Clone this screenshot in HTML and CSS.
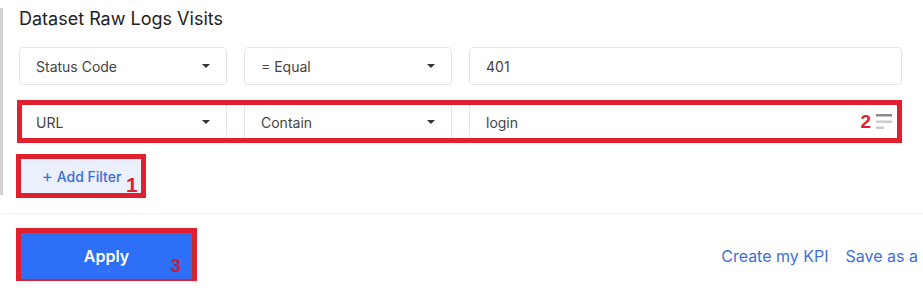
FILE: index.html
```html
<!DOCTYPE html>
<html lang="en">
<head>
  <meta charset="UTF-8">
  <meta name="viewport" content="width=device-width, initial-scale=1.0">
  <title>Dataset Raw Logs Visits - Filters</title>
  <link rel="stylesheet" href="styles.css">
</head>
<body>
  <!-- Filter panel -->
  <div class="panel">
    <h2 class="panel-title">Dataset Raw Logs Visits</h2>

    <!-- Filter 1 -->
    <div class="filter-row">
      <div class="field">
        <span>Status Code</span>
        <span class="caret"></span>
      </div>
      <div class="field">
        <span>= Equal</span>
        <span class="caret"></span>
      </div>
      <div class="field">
        <span>401</span>
      </div>
    </div>

    <!-- Filter 2 -->
    <div class="filter-row marked">
      <div class="field">
        <span>URL</span>
        <span class="caret"></span>
      </div>
      <div class="field">
        <span>Contain</span>
        <span class="caret"></span>
      </div>
      <div class="field">
        <span>login</span>
        <svg class="drag-icon" width="16" height="16" viewBox="0 0 16 16">
          <rect x="0" y="1" width="16" height="2.5" fill="#8a8a8a"/>
          <rect x="0" y="7.5" width="16" height="2.5" fill="#cccccc"/>
          <rect x="0" y="13.5" width="8" height="2.5" fill="#cccccc"/>
        </svg>
      </div>
      <div class="mark"></div>
      <span class="mark-num num-2">2</span>
    </div>

    <!-- Add filter -->
    <div class="add-wrap">
      <button class="btn-add"><span class="plus">+</span> Add Filter</button>
      <div class="mark"></div>
      <span class="mark-num num-1">1</span>
    </div>
  </div>

  <div class="divider"></div>

  <!-- Actions -->
  <div class="actions">
    <div class="apply-wrap">
      <button class="btn-apply">Apply</button>
      <div class="mark"></div>
      <span class="mark-num num-3">3</span>
    </div>
    <div class="links">
      <a href="#">Create my KPI</a>
      <a href="#">Save as a</a>
    </div>
  </div>
</body>
</html>
```

FILE: styles.css
```css
body {
  margin: 0;
  font-family: 'Inter', 'Liberation Sans', sans-serif;
  background-color: #fff;
  color: #444;
  overflow: hidden;
}

.panel {
  margin-top: 8px;
  border-left: 3px solid #d2d2d2;
  padding: 0 21px 0 16px;
}

.panel-title {
  margin: 0;
  font-size: 18px;
  font-weight: 400;
  line-height: 22px;
  color: #222;
}

.filter-row {
  display: grid;
  grid-template-columns: 208px 208px 1fr;
  gap: 17px;
  margin-top: 17px;
}

.filter-row.marked {
  position: relative;
  margin-top: 18px;
}

.field {
  display: flex;
  align-items: center;
  justify-content: space-between;
  height: 38px;
  box-sizing: border-box;
  padding: 0 16px;
  border: 1px solid #e6e6e6;
  border-radius: 4px;
  font-size: 14px;
  color: #444;
}

.caret {
  width: 0;
  height: 0;
  border-left: 4px solid transparent;
  border-right: 4px solid transparent;
  border-top: 4px solid #333;
}

.drag-icon {
  margin-right: -7px;
  margin-top: -2px;
}

/* red annotation frames */
.mark {
  position: absolute;
  top: -3px;
  bottom: -3px;
  left: -3px;
  right: -3px;
  border: 5px solid #e0202e;
  pointer-events: none;
}

.filter-row.marked .mark {
  left: -2px;
  right: 0;
  top: -3px;
  bottom: -2px;
}

.mark-num {
  position: absolute;
  font-family: 'Liberation Sans', Arial, sans-serif;
  font-weight: bold;
  font-size: 19px;
  line-height: 19px;
  color: #dc2230;
}

.num-2 {
  right: 31px;
  top: 9px;
}

.num-1 {
  left: 107px;
  top: 17px;
  font-size: 21px;
  line-height: 21px;
}

.num-3 {
  right: 13px;
  top: 25px;
  color: #c2203f;
}

.add-wrap {
  position: relative;
  display: inline-block;
  margin-top: 16px;
  vertical-align: top;
}

.btn-add {
  display: block;
  width: 124px;
  height: 38px;
  padding: 0 0 0 1px;
  border: none;
  background-color: #ebf0fd;
  color: #3a6fd9;
  font-family: inherit;
  font-size: 14px;
  font-weight: 500;
  cursor: pointer;
}

.btn-add .plus {
  font-size: 17px;
  font-weight: 400;
  line-height: 1;
}

.divider {
  margin: 18px 0 0 2px;
  height: 1px;
  background-color: #eeeeee;
}

.actions {
  display: flex;
  align-items: center;
  padding: 17px 5px 0 19px;
}

.apply-wrap {
  position: relative;
}

.btn-apply {
  display: block;
  width: 175px;
  height: 50px;
  border: none;
  background-color: #2d6ff7;
  color: #fff;
  font-family: inherit;
  font-size: 16px;
  font-weight: 600;
  cursor: pointer;
}

.links {
  margin-left: auto;
  display: flex;
  gap: 17px;
}

.links a {
  font-size: 16px;
  color: #3f6fd9;
  text-decoration: none;
}
```
